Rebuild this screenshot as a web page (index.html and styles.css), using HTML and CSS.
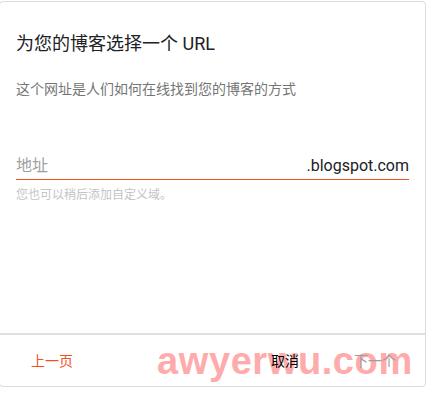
FILE: index.html
```html
<!DOCTYPE html>
<html lang="zh-CN">
<head>
<meta charset="utf-8">
<title>为您的博客选择一个 URL</title>
<link rel="stylesheet" href="styles.css">
</head>
<body>
<div class="card">
  <div class="body">
    <h1 class="title">为您的博客选择一个 URL</h1>
    <p class="subtitle">这个网址是人们如何在线找到您的博客的方式</p>
    <div class="field">
      <span class="placeholder">地址</span>
      <span class="suffix">.blogspot.com</span>
    </div>
    <p class="helper">您也可以稍后添加自定义域。</p>
  </div>
  <div class="footer">
    <button class="btn btn-back">上一页</button>
    <div class="right">
      <button class="btn btn-cancel">取消</button>
      <button class="btn btn-next">下一个</button>
    </div>
  </div>
</div>
<div class="watermark">awyerwu.com</div>
</body>
</html>
```
FILE: styles.css
```css
html, body {
  margin: 0;
  padding: 0;
  background: #ffffff;
}
body {
  position: relative;
  width: 432px;
  height: 393px;
  overflow: hidden;
  font-family: Roboto, "Noto Sans CJK SC", sans-serif;
}
.card {
  box-sizing: border-box;
  margin: 1px 0 0 -1px;
  width: 427px;
  height: 386px;
  border: 1px solid #dadce0;
  border-radius: 4px;
  background: #fff;
  display: flex;
  flex-direction: column;
}
.body {
  flex: 1;
  padding: 30px 16px 0 16px;
}
.title {
  margin: 0;
  font-size: 18px;
  line-height: 24px;
  font-weight: 400;
  color: #202124;
}
.subtitle {
  margin: 23px 0 0;
  font-size: 14px;
  line-height: 20px;
  color: #757575;
}
.field {
  margin-top: 55px;
  display: flex;
  justify-content: space-between;
  align-items: baseline;
  border-bottom: 1px solid #f4511e;
  height: 25px;
  font-size: 16px;
  line-height: 24px;
}
.placeholder {
  color: #a0a0a0;
}
.suffix {
  color: #202124;
}
.helper {
  margin: 7px 0 0;
  font-size: 12px;
  line-height: 16px;
  color: #c4c4c4;
}
.footer {
  position: relative;
  z-index: 1;
  height: 51px;
  border-top: 2px solid #e0e0e0;
  display: flex;
  justify-content: space-between;
  align-items: center;
  padding: 0 13px 0 15px;
}
.right {
  display: flex;
  gap: 23px;
}
.btn {
  font-family: Roboto, "Noto Sans CJK SC", sans-serif;
  font-size: 14px;
  line-height: 20px;
  background: none;
  border: none;
  padding: 0 16px;
  margin: 0;
  cursor: pointer;
}
.btn-back {
  color: #f4511e;
}
.btn-cancel {
  color: #000;
}
.btn-next {
  color: #9e9e9e;
}
.watermark {
  position: absolute;
  left: 157px;
  top: 342px;
  z-index: 0;
  font-family: "Liberation Sans", Arial, sans-serif;
  font-weight: 700;
  font-size: 38px;
  line-height: 1;
  letter-spacing: 0.6px;
  color: #ffabab;
}
```
